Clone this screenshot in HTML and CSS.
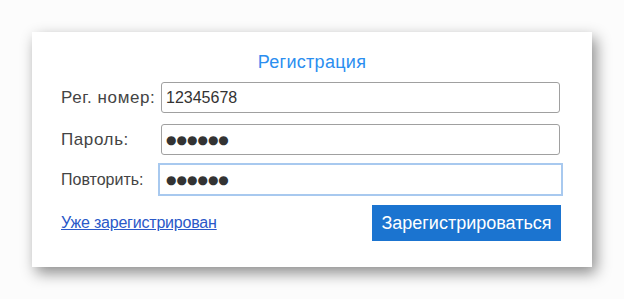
FILE: index.html
```html
<!DOCTYPE html>
<html lang="ru">
<head>
    <meta charset="UTF-8">
    <title>Регистрация</title>
    <link rel="stylesheet" href="styles.css">
</head>
<body>
    <div class="card">
        <h1 class="title">Регистрация</h1>

        <div class="form-row">
            <label class="form-label">Рег. номер:</label>
            <input type="text" class="form-input" value="12345678">
        </div>
        <div class="form-row">
            <label class="form-label">Пароль:</label>
            <input type="text" class="form-input secret" value="●●●●●●">
        </div>
        <div class="form-row focused">
            <label class="form-label small">Повторить:</label>
            <input type="text" class="form-input secret" value="●●●●●●">
        </div>

        <div class="actions">
            <a href="#" class="login-link">Уже зарегистрирован</a>
            <button class="register-btn">Зарегистрироваться</button>
        </div>
    </div>
</body>
</html>
```

FILE: styles.css
```css
body {
    font-family: 'Liberation Sans', Arial, sans-serif;
    background-color: #fcfcfc;
    margin: 0;
    padding: 32px;
}
.card {
    background-color: #fff;
    width: 560px;
    height: 235px;
    box-sizing: border-box;
    padding: 18px 32px 0 29px;
    box-shadow: 4px 6px 14px rgba(0,0,0,0.45);
}
.title {
    margin: 0 0 8px 3px;
    text-align: center;
    font-size: 18px;
    font-weight: normal;
    letter-spacing: 0.3px;
    line-height: 24px;
    color: #2b8ef0;
}
.form-row {
    display: flex;
    align-items: center;
    height: 31px;
    margin-bottom: 11px;
}
.form-label {
    width: 100px;
    flex-shrink: 0;
    font-size: 17px;
    letter-spacing: 0.6px;
    color: #444;
}
.form-input {
    flex-grow: 1;
    height: 31px;
    box-sizing: border-box;
    padding: 0 4px;
    border: 1px solid #a0a0a0;
    border-radius: 3px;
    font-family: inherit;
    font-size: 16px;
    color: #333;
    outline: none;
}
.secret {
    font-family: 'DejaVu Sans', sans-serif;
    font-size: 12px;
    letter-spacing: 0;
}
.form-row.focused {
    height: 33px;
    margin-top: -3px;
    margin-bottom: 9px;
}
.focused .form-label {
    width: 97px;
}
.focused .form-input {
    height: 33px;
    margin-right: -3px;
    border: 2px solid #a8c9ef;
    border-radius: 0;
    padding-left: 6px;
}
.form-label.small {
    font-size: 16px;
    letter-spacing: 0;
}
.actions {
    display: flex;
    justify-content: space-between;
    align-items: center;
}
.login-link {
    font-size: 16px;
    letter-spacing: -0.2px;
    color: #2a58c8;
    text-decoration: underline;
}
.register-btn {
    width: 189px;
    height: 36px;
    margin-right: -1px;
    background-color: #1b74d0;
    color: #fff;
    border: none;
    font-family: inherit;
    font-size: 18px;
    cursor: pointer;
}
```
